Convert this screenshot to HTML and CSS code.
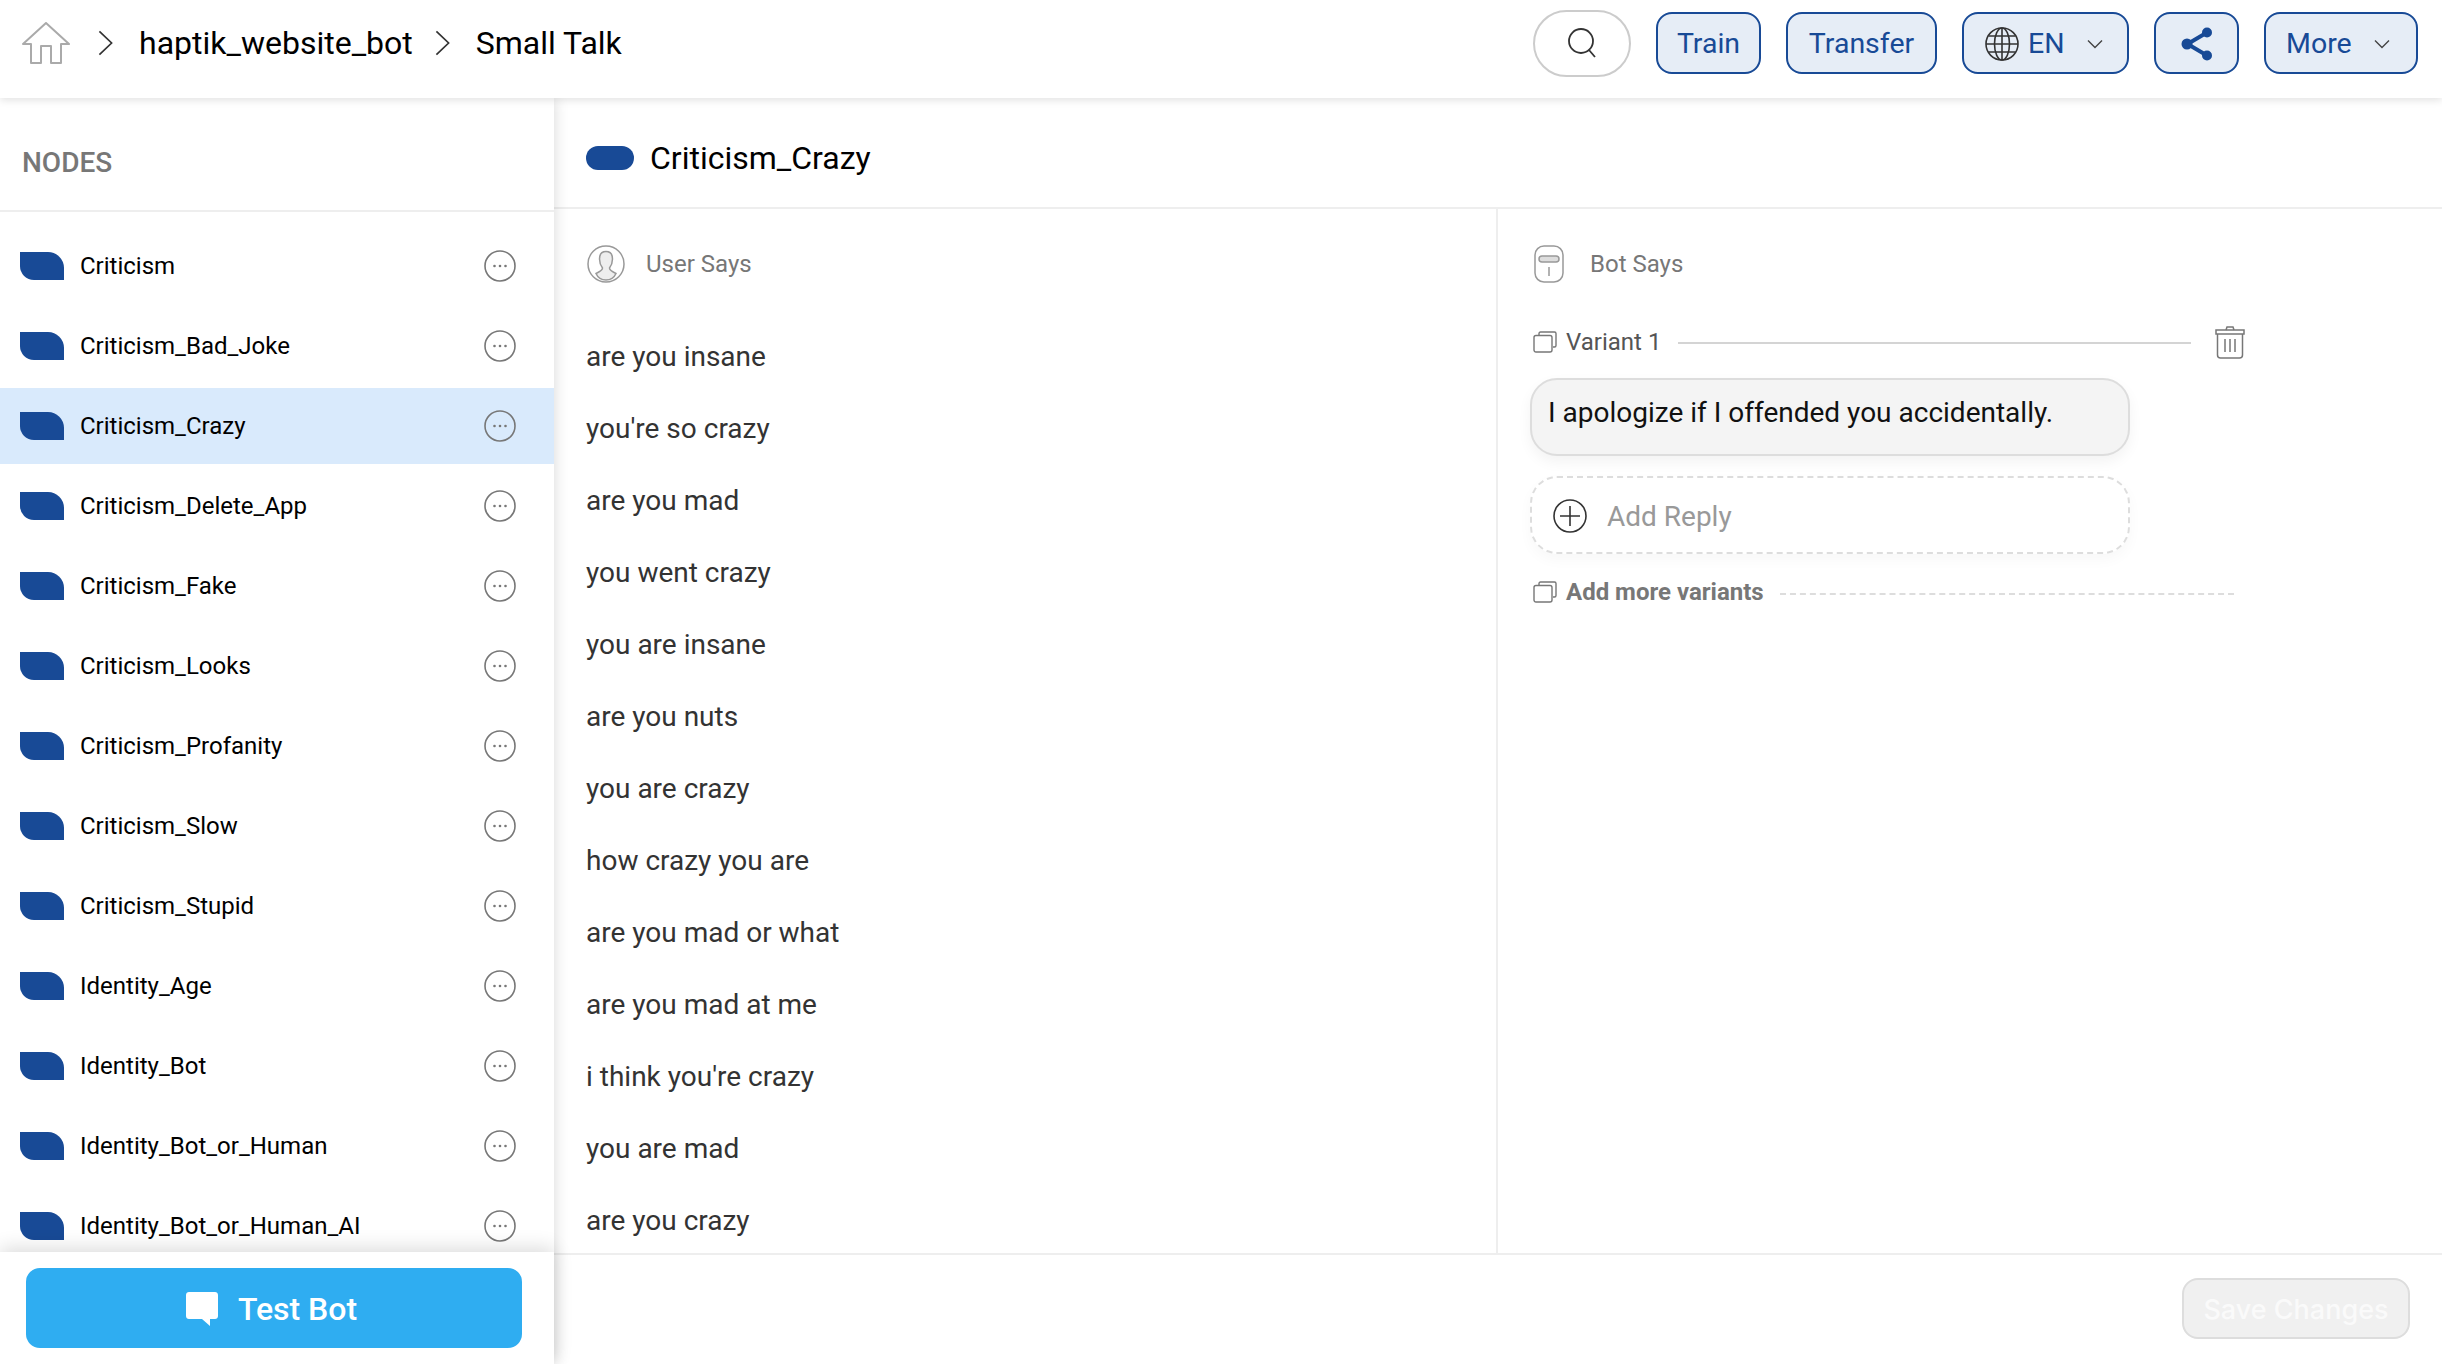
FILE: index.html

```html
<!DOCTYPE html>
<html lang="en">
<head>
    <meta charset="UTF-8">
    <title>Small Talk</title>
    <link rel="stylesheet" href="styles.css">
</head>
<body>
    <svg class="sprites" width="0" height="0">
        <symbol id="dots" viewBox="0 0 32 32">
            <circle cx="16" cy="16" r="15" fill="none" stroke="#777" stroke-width="1.6"/>
            <circle cx="10.5" cy="16" r="1.3" fill="#777"/>
            <circle cx="16" cy="16" r="1.3" fill="#777"/>
            <circle cx="21.5" cy="16" r="1.3" fill="#777"/>
        </symbol>
        <symbol id="pages" viewBox="0 0 24 22">
            <path d="M6 4V2.5C6 1.6 6.6 1 7.5 1H21.5C22.4 1 23 1.6 23 2.5V14.5C23 15.4 22.4 16 21.5 16H20" fill="none" stroke="#777" stroke-width="1.4"/>
            <rect x="1" y="4.5" width="18" height="16.5" rx="2" fill="#fff" stroke="#777" stroke-width="1.4"/>
        </symbol>
        <symbol id="chev" viewBox="0 0 16 28">
            <path d="M1.5 1.5L14.5 14L1.5 26.5" fill="none" stroke="#333" stroke-width="1.8"/>
        </symbol>
        <symbol id="caret" viewBox="0 0 16 10">
            <path d="M1 1.5L8 8.5L15 1.5" fill="none" stroke="#444" stroke-width="1.4"/>
        </symbol>
    </svg>

    <header class="topbar">
        <div class="crumbs">
            <svg class="home-icon" viewBox="0 0 48 42">
                <path d="M1 22L24 1L47 22H39V41H29V24H19V41H9V22Z" fill="none" stroke="#aaa" stroke-width="2" stroke-linejoin="round"/>
            </svg>
            <svg class="chev-icon"><use href="#chev"/></svg>
            <span class="crumb">haptik_website_bot</span>
            <svg class="chev-icon"><use href="#chev"/></svg>
            <span class="crumb">Small Talk</span>
        </div>
        <div class="actions">
            <button class="search-btn">
                <svg class="search-icon" viewBox="0 0 30 30">
                    <circle cx="14" cy="13" r="12" fill="none" stroke="#333" stroke-width="1.8"/>
                    <path d="M22 22L28 29" stroke="#333" stroke-width="1.8"/>
                </svg>
            </button>
            <button class="btn btn-train">Train</button>
            <button class="btn btn-transfer">Transfer</button>
            <button class="btn btn-lang">
                <svg class="globe-icon" viewBox="0 0 34 34">
                    <g fill="none" stroke="#333" stroke-width="1.6">
                        <circle cx="17" cy="17" r="16"/>
                        <ellipse cx="17" cy="17" rx="7.5" ry="16"/>
                        <path d="M17 1V33M1 17H33M3.5 9H30.5M3.5 25H30.5"/>
                    </g>
                </svg>
                <span>EN</span>
                <svg class="caret-icon"><use href="#caret"/></svg>
            </button>
            <button class="btn btn-share">
                <svg class="share-icon" viewBox="0 0 32 34">
                    <path d="M26 5.500L6.500 17L26 28.500" fill="none" stroke="#184a96" stroke-width="4"/>
                    <circle cx="26" cy="5.500" r="5" fill="#184a96"/>
                    <circle cx="6" cy="17" r="5.500" fill="#184a96"/>
                    <circle cx="26" cy="28.500" r="5" fill="#184a96"/>
                </svg>
            </button>
            <button class="btn btn-more">
                <span>More</span>
                <svg class="caret-icon"><use href="#caret"/></svg>
            </button>
        </div>
    </header>

    <div class="layout">
        <aside class="sidebar">
            <div class="sidebar-head">NODES</div>
            <ul class="node-list">
                <li class="node"><i class="leaf"></i><span>Criticism</span><svg class="dots-icon"><use href="#dots"/></svg></li>
                <li class="node"><i class="leaf"></i><span>Criticism_Bad_Joke</span><svg class="dots-icon"><use href="#dots"/></svg></li>
                <li class="node active"><i class="leaf"></i><span>Criticism_Crazy</span><svg class="dots-icon"><use href="#dots"/></svg></li>
                <li class="node"><i class="leaf"></i><span>Criticism_Delete_App</span><svg class="dots-icon"><use href="#dots"/></svg></li>
                <li class="node"><i class="leaf"></i><span>Criticism_Fake</span><svg class="dots-icon"><use href="#dots"/></svg></li>
                <li class="node"><i class="leaf"></i><span>Criticism_Looks</span><svg class="dots-icon"><use href="#dots"/></svg></li>
                <li class="node"><i class="leaf"></i><span>Criticism_Profanity</span><svg class="dots-icon"><use href="#dots"/></svg></li>
                <li class="node"><i class="leaf"></i><span>Criticism_Slow</span><svg class="dots-icon"><use href="#dots"/></svg></li>
                <li class="node"><i class="leaf"></i><span>Criticism_Stupid</span><svg class="dots-icon"><use href="#dots"/></svg></li>
                <li class="node"><i class="leaf"></i><span>Identity_Age</span><svg class="dots-icon"><use href="#dots"/></svg></li>
                <li class="node"><i class="leaf"></i><span>Identity_Bot</span><svg class="dots-icon"><use href="#dots"/></svg></li>
                <li class="node"><i class="leaf"></i><span>Identity_Bot_or_Human</span><svg class="dots-icon"><use href="#dots"/></svg></li>
                <li class="node"><i class="leaf"></i><span>Identity_Bot_or_Human_AI</span><svg class="dots-icon"><use href="#dots"/></svg></li>
            </ul>
            <div class="sidebar-foot">
                <button class="test-btn">
                    <svg class="chat-icon" viewBox="0 0 32 34">
                        <path d="M3 0H29C30.700 0 32 1.300 32 3V24C32 25.700 30.700 27 29 27H24V34L16 27H3C1.300 27 0 25.700 0 24V3C0 1.300 1.300 0 3 0Z" fill="#fff"/>
                    </svg>
                    Test Bot
                </button>
            </div>
        </aside>

        <main class="main">
            <div class="node-title"><i class="pill"></i><h1>Criticism_Crazy</h1></div>
            <div class="columns">
                <section class="col-user">
                    <div class="col-head">
                        <svg class="user-icon" viewBox="0 0 38 38">
                            <circle cx="19" cy="19" r="18" fill="#fff" stroke="#999" stroke-width="1.5"/>
                            <path d="M19 6.500C14.500 6.500 12.500 10 12.500 14C12.500 18 14 21 15.500 23C15.500 25.500 13 26.500 9 28.500C11 33 15 35 19 35C23 35 27 33 29 28.500C25 26.500 22.500 25.500 22.500 23C24 21 25.500 18 25.500 14C25.500 10 23.500 6.500 19 6.500Z" fill="#eee" stroke="#999" stroke-width="1.500"/>
                        </svg>
                        <span>User Says</span>
                    </div>
                    <ul class="phrases">
                        <li>are you insane</li>
                        <li>you're so crazy</li>
                        <li>are you mad</li>
                        <li>you went crazy</li>
                        <li>you are insane</li>
                        <li>are you nuts</li>
                        <li>you are crazy</li>
                        <li>how crazy you are</li>
                        <li>are you mad or what</li>
                        <li>are you mad at me</li>
                        <li>i think you're crazy</li>
                        <li>you are mad</li>
                        <li>are you crazy</li>
                    </ul>
                </section>
                <section class="col-bot">
                    <div class="col-head">
                        <svg class="bot-icon" viewBox="0 0 30 38">
                            <rect x="1" y="1" width="28" height="36" rx="9" fill="#fff" stroke="#999" stroke-width="1.500"/>
                            <rect x="5" y="11" width="20" height="6" rx="3" fill="#ddd" stroke="#999" stroke-width="1.500"/>
                            <path d="M15 22V31" stroke="#999" stroke-width="1.500"/>
                        </svg>
                        <span>Bot Says</span>
                    </div>
                    <div class="variant-head">
                        <svg class="pages-icon"><use href="#pages"/></svg>
                        <span>Variant 1</span>
                        <div class="variant-line"></div>
                        <svg class="trash-icon" viewBox="0 0 30 34">
                            <g fill="none" stroke="#777" stroke-width="1.500">
                                <path d="M1 5H29V9H1Z"/>
                                <path d="M11 5L12 2H18L19 5"/>
                                <path d="M2.500 9V30C2.500 32 3.500 33 5.500 33H24.500C26.500 33 27.500 32 27.500 30V9"/>
                                <path d="M10 14V27M15 14V27M20 14V27"/>
                            </g>
                        </svg>
                    </div>
                    <div class="reply">I apologize if I offended you accidentally.</div>
                    <div class="add-reply">
                        <svg class="plus-icon" viewBox="0 0 34 34">
                            <circle cx="17" cy="17" r="16" fill="none" stroke="#333" stroke-width="1.600"/>
                            <path d="M17 7V27M7 17H27" stroke="#333" stroke-width="1.600"/>
                        </svg>
                        <span>Add Reply</span>
                    </div>
                    <div class="add-variant">
                        <svg class="pages-icon"><use href="#pages"/></svg>
                        <span>Add more variants</span>
                        <div class="add-line"></div>
                    </div>
                </section>
            </div>
            <div class="main-foot">
                <button class="save-btn">Save Changes</button>
            </div>
        </main>
    </div>
</body>
</html>
```

FILE: styles.css

```css
* {
    box-sizing: border-box;
}
html, body {
    height: 100%;
}
body {
    margin: 0;
    font-family: Roboto, "Liberation Sans", sans-serif;
    color: #000;
    background: #fff;
    overflow: hidden;
    display: flex;
    flex-direction: column;
}
.sprites {
    position: absolute;
}
button {
    font-family: inherit;
    cursor: pointer;
}
ul {
    list-style: none;
    margin: 0;
    padding: 0;
}

/* top bar */
.topbar {
    height: 98px;
    flex: none;
    display: flex;
    align-items: center;
    justify-content: space-between;
    padding: 0 24px 12px 22px;
    position: relative;
    z-index: 3;
    background: #fff;
    box-shadow: 0 2px 8px rgba(0, 0, 0, 0.12);
}
.crumbs {
    display: flex;
    align-items: center;
}
.crumb {
    font-size: 32px;
    margin-right: 22px;
}
.home-icon {
    width: 48px;
    height: 42px;
    margin-right: 28px;
}
.chev-icon {
    width: 15px;
    height: 28px;
    margin-right: 26px;
}
.actions {
    display: flex;
    align-items: center;
    gap: 25px;
}
.search-btn {
    width: 98px;
    height: 67px;
    border: 2px solid #ccc;
    border-radius: 34px;
    background: #fff;
    display: flex;
    align-items: center;
    justify-content: center;
    padding: 0;
}
.search-icon {
    width: 30px;
    height: 30px;
}
.btn {
    height: 62px;
    border: 2px solid #184a96;
    border-radius: 16px;
    background: #e6edf6;
    color: #184a96;
    font-size: 28.500px;
    display: flex;
    align-items: center;
    justify-content: center;
    padding: 1px 0 0;
}
.btn-train {
    width: 105px;
}
.btn-transfer {
    width: 151px;
}
.btn-lang {
    width: 167px;
    justify-content: flex-start;
    padding-left: 21px;
}
.btn-share {
    width: 85px;
}
.btn-more {
    width: 154px;
    justify-content: flex-start;
    padding-left: 20px;
}
.globe-icon {
    width: 34px;
    height: 34px;
    margin-right: 9px;
}
.caret-icon {
    width: 16px;
    height: 10px;
    margin-left: 22px;
}
.share-icon {
    width: 32px;
    height: 34px;
}

/* page body */
.layout {
    flex: 1;
    display: flex;
    min-height: 0;
}
.sidebar {
    width: 554px;
    flex: none;
    display: flex;
    flex-direction: column;
    position: relative;
    z-index: 2;
    background: #fff;
    box-shadow: 0 0 14px rgba(0, 0, 0, 0.16);
}
.sidebar-head {
    height: 114px;
    flex: none;
    border-bottom: 2px solid #eee;
    color: #777;
    font-size: 28px;
    font-weight: 500;
    padding: 49px 0 0 22px;
    line-height: 32px;
}
.node-list {
    flex: 1;
    min-height: 0;
    overflow: hidden;
    padding-top: 16px;
}
.node {
    height: 76px;
    margin-bottom: 4px;
    display: flex;
    align-items: center;
    padding: 0 38px 0 20px;
    font-size: 24px;
}
.node span {
    flex: 1;
    margin-left: 16px;
}
.node.active {
    background: #d9eafc;
}
.leaf {
    width: 44px;
    height: 28px;
    flex: none;
    background: #184a96;
    border-radius: 0 16px 0 14px;
}
.dots-icon {
    width: 32px;
    height: 32px;
}
.sidebar-foot {
    height: 112px;
    flex: none;
    padding: 16px 32px 16px 26px;
    position: relative;
    background: #fff;
    box-shadow: 0 -4px 18px rgba(0, 0, 0, 0.14);
}
.test-btn {
    width: 100%;
    height: 80px;
    border: none;
    border-radius: 14px;
    background: #2fadf1;
    color: #fff;
    font-size: 32px;
    font-weight: 500;
    display: flex;
    align-items: center;
    justify-content: center;
    gap: 20px;
    padding: 1px 5px 0 0;
}
.chat-icon {
    width: 32px;
    height: 34px;
}

/* main panel */
.main {
    flex: 1;
    min-width: 0;
    display: flex;
    flex-direction: column;
}
.node-title {
    height: 111px;
    flex: none;
    border-bottom: 2px solid #eee;
    display: flex;
    align-items: center;
    padding: 11px 0 0 32px;
}
.node-title h1 {
    margin: 0 0 0 16px;
    font-size: 32px;
    font-weight: 400;
}
.pill {
    width: 48px;
    height: 24px;
    background: #184a96;
    border-radius: 12px;
}
.columns {
    flex: 1;
    min-height: 0;
    display: flex;
}
.col-user {
    width: 944px;
    flex: none;
    border-right: 2px solid #eee;
    padding: 36px 0 0 32px;
    overflow: hidden;
}
.col-bot {
    flex: 1;
    padding: 36px 0 0 32px;
}
.col-head {
    display: flex;
    align-items: center;
    height: 38px;
    color: #777;
    font-size: 24px;
}
.user-icon {
    width: 38px;
    height: 38px;
    margin: 0 21px 0 1px;
}
.bot-icon {
    width: 30px;
    height: 38px;
    margin: 0 26px 0 4px;
}
.phrases {
    margin-top: 38px;
}
.phrases li {
    height: 72px;
    line-height: 72px;
    font-size: 28px;
    color: #333;
}
.variant-head {
    display: flex;
    align-items: center;
    height: 34px;
    margin-top: 41px;
    padding-top: 1px;
    color: #555;
    font-size: 24px;
}
.pages-icon {
    width: 24px;
    height: 22px;
    margin: 0 9px 0 3px;
    flex: none;
}
.variant-line {
    width: 513px;
    height: 2px;
    background: #d4d4d4;
    margin: 2px 24px 0 17px;
}
.trash-icon {
    width: 30px;
    height: 34px;
}
.reply {
    width: 600px;
    height: 78px;
    margin-top: 20px;
    padding: 0 16px;
    border: 2px solid #ddd;
    border-radius: 27px;
    background: #f4f4f4;
    box-shadow: 0 6px 14px rgba(0, 0, 0, 0.05);
    font-size: 28px;
    line-height: 65px;
    color: #111;
}
.add-reply {
    width: 600px;
    height: 78px;
    margin-top: 20px;
    padding: 2px 0 0 21px;
    border: 2px dashed #ddd;
    border-radius: 27px;
    box-shadow: 0 6px 14px rgba(0, 0, 0, 0.03);
    display: flex;
    align-items: center;
    color: #999;
    font-size: 28px;
}
.plus-icon {
    width: 34px;
    height: 34px;
    margin-right: 20px;
}
.add-variant {
    display: flex;
    align-items: center;
    height: 30px;
    margin-top: 23px;
    color: #777;
    font-size: 24px;
    font-weight: 700;
}
.add-line {
    width: 454px;
    border-top: 2px dashed #ddd;
    margin: 4px 0 0 16px;
}
.main-foot {
    height: 111px;
    flex: none;
    border-top: 2px solid #eee;
    display: flex;
    justify-content: flex-end;
    padding: 23px 32px 0 0;
}
.save-btn {
    width: 228px;
    height: 61px;
    border: 2px solid #ddd;
    border-radius: 16px;
    background: #f0f0f0;
    color: #fafafa;
    font-family: Inter, sans-serif;
    font-size: 27px;
    font-weight: 500;
    padding: 2px 0 0;
}
```
